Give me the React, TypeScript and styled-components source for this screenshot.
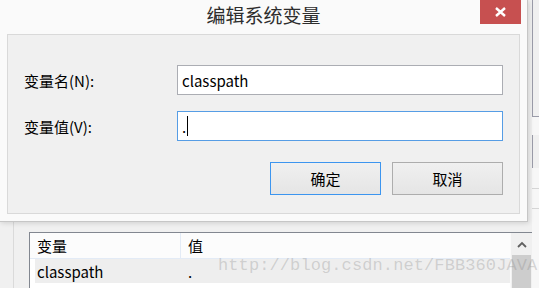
import React from 'react';
import styled, { createGlobalStyle } from 'styled-components';

const GlobalStyle = createGlobalStyle`
  html, body {
    margin: 0;
    padding: 0;
  }
  body {
    font-family: "Noto Sans CJK SC", "Noto Sans", sans-serif;
    background: #f0f0f0;
  }
  * {
    box-sizing: border-box;
  }
`;

const Screen = styled.div`
  position: relative;
  width: 539px;
  height: 288px;
  overflow: hidden;
  background: #f0f0f0;
`;

/* the window behind the dialog */
const Backdrop = styled.div`
  display: flex;
  height: 100%;
`;

const BackMain = styled.div`
  width: 532px;
  display: flex;
  flex-direction: column;
  padding: 222px 0 0 13px;
`;

const BackPanel = styled.div`
  flex: 1;
  display: flex;
  flex-direction: column;
  border-left: 1px solid #dadada;
  padding: 10px 0 0 15px;
`;

const ListBox = styled.div`
  width: 504px;
  flex: 1;
  display: flex;
  background: #fff;
  border: 1px solid #828790;
  border-bottom: none;
`;

const ListBody = styled.div`
  flex: 1;
  display: flex;
  flex-direction: column;
  font-size: 15px;
  color: #000;
`;

const HeaderRow = styled.div`
  display: flex;
  height: 26px;
  background: #fcfcfc;
  border-bottom: 1px solid #e3ebf6;
`;

const HeaderCell = styled.div<{ $width?: number }>`
  width: ${({ $width }) => ($width ? `${$width}px` : 'auto')};
  flex: ${({ $width }) => ($width ? 'none' : '1')};
  display: flex;
  align-items: center;
  padding-left: 7px;
  border-right: ${({ $width }) => ($width ? '1px solid #e3ebf6' : 'none')};
`;

const DataRow = styled.div`
  display: flex;
  height: 24px;
  margin-left: 5px;
  background: #eeeeee;
`;

const DataCell = styled.div<{ $width?: number; $pad: number }>`
  width: ${({ $width }) => ($width ? `${$width}px` : 'auto')};
  flex: ${({ $width }) => ($width ? 'none' : '1')};
  display: flex;
  align-items: center;
  padding-left: ${({ $pad }) => $pad}px;
`;

const ScrollBar = styled.div`
  width: 22px;
  display: flex;
  flex-direction: column;
  background: #f0f0f0;
  border-left: 1px solid #fafafa;
`;

const ScrollArrow = styled.div`
  height: 22px;
  display: flex;
  align-items: center;
  justify-content: center;
`;

const ScrollThumb = styled.div`
  flex: 1;
  margin: 0 1px;
  background: #cdcdcd;
`;

const BackSide = styled.div`
  flex: 1;
  display: flex;
  flex-direction: column;
  background: #f7f7f7;
`;

const SideBox = styled.div<{ $h: number; $gap: number; $bottom?: boolean }>`
  height: ${({ $h }) => $h}px;
  margin-top: ${({ $gap }) => $gap}px;
  border-left: 1px solid #9b9ca9;
  border-bottom: ${({ $bottom }) => ($bottom ? '1px solid #9b9ca9' : 'none')};
  background: #f0f0f0;
`;

const SideLine = styled.div<{ $gap: number }>`
  margin-top: ${({ $gap }) => $gap}px;
  height: 1px;
  background: #d6d6d6;
`;

const Watermark = styled.div`
  position: absolute;
  left: 218px;
  top: 256px;
  font-family: "Liberation Mono", "DejaVu Sans Mono", monospace;
  font-size: 17px;
  letter-spacing: 0.1px;
  color: rgba(140, 140, 140, 0.32);
  white-space: nowrap;
  pointer-events: none;
`;

/* the dialog */
const Dialog = styled.div`
  position: absolute;
  left: 0;
  top: 0;
  width: 528px;
  height: 222px;
  display: flex;
  flex-direction: column;
  padding: 0 7px 7px 7px;
  background: #fafafa;
  border-right: 1px solid #c6c6c6;
  border-bottom: 1px solid #c6c6c6;
  box-shadow: 1px 1px 5px rgba(0, 0, 0, 0.14);
`;

const TitleBar = styled.div`
  position: relative;
  height: 34px;
  padding-bottom: 4px;
  display: flex;
  align-items: center;
  justify-content: center;
`;

const Title = styled.div`
  font-size: 19px;
  line-height: 30px;
  color: #2d2d2d;
`;

const CloseButton = styled.div`
  position: absolute;
  top: 0;
  right: -1px;
  width: 41px;
  height: 24px;
  display: flex;
  align-items: center;
  justify-content: center;
  background: #c75050;
`;

const Panel = styled.div`
  flex: 1;
  display: flex;
  flex-direction: column;
  gap: 16px;
  padding: 30px 16px 0 16px;
  background: #f0f0f0;
  border: 1px solid #d9d9d9;
`;

const FieldRow = styled.div`
  display: grid;
  grid-template-columns: 153px 1fr;
  align-items: center;
  height: 30px;
`;

const Label = styled.div`
  font-size: 15px;
  color: #000;
`;

const TextBox = styled.div<{ $focused?: boolean }>`
  height: 30px;
  display: flex;
  align-items: center;
  padding: 0 4px;
  font-size: 15px;
  color: #000;
  background: #fff;
  border: 1px solid ${({ $focused }) => ($focused ? '#569de5' : '#abadb3')};
`;

const Caret = styled.span`
  display: inline-block;
  width: 1px;
  height: 20px;
  margin-left: 1px;
  background: #000;
`;

const ButtonRow = styled.div`
  display: flex;
  justify-content: flex-end;
  gap: 11px;
  margin-top: 5px;
`;

const Button = styled.div<{ $primary?: boolean }>`
  width: 111px;
  height: 33px;
  display: flex;
  align-items: center;
  justify-content: center;
  font-size: 15px;
  color: #000;
  background: linear-gradient(#f0f0f0, #e5e5e5);
  border: 1px solid ${({ $primary }) => ($primary ? '#3c95ef' : '#adadad')};
`;

export default function App() {
  return (
    <Screen>
      <GlobalStyle />
      <Backdrop>
        <BackMain>
          <BackPanel>
            <ListBox>
              <ListBody>
                <HeaderRow>
                  <HeaderCell $width={151}>变量</HeaderCell>
                  <HeaderCell>值</HeaderCell>
                </HeaderRow>
                <DataRow>
                  <DataCell $width={146} $pad={2}>classpath</DataCell>
                  <DataCell $pad={7}>.</DataCell>
                </DataRow>
              </ListBody>
              <ScrollBar>
                <ScrollArrow>
                  <svg width="10" height="7" viewBox="0 0 10 7">
                    <polyline points="1,6 5,2 9,6" fill="none" stroke="#606060" strokeWidth="1.8" />
                  </svg>
                </ScrollArrow>
                <ScrollThumb />
              </ScrollBar>
            </ListBox>
          </BackPanel>
        </BackMain>
        <BackSide>
          <SideBox $h={117} $gap={0} $bottom />
          <SideBox $h={33} $gap={18} />
          <SideLine $gap={20} />
          <SideLine $gap={19} />
        </BackSide>
      </Backdrop>
      <Watermark>http://blog.csdn.net/FBB360JAVA</Watermark>

      <Dialog>
        <TitleBar>
          <Title>编辑系统变量</Title>
          <CloseButton>
            <svg width="11" height="10" viewBox="0 0 11 10">
              <path d="M1 1 L10 9 M10 1 L1 9" stroke="#fff" strokeWidth="2.4" />
            </svg>
          </CloseButton>
        </TitleBar>
        <Panel>
          <FieldRow>
            <Label>变量名(N):</Label>
            <TextBox>classpath</TextBox>
          </FieldRow>
          <FieldRow>
            <Label>变量值(V):</Label>
            <TextBox $focused>
              .<Caret />
            </TextBox>
          </FieldRow>
          <ButtonRow>
            <Button $primary>确定</Button>
            <Button>取消</Button>
          </ButtonRow>
        </Panel>
      </Dialog>
    </Screen>
  );
}
